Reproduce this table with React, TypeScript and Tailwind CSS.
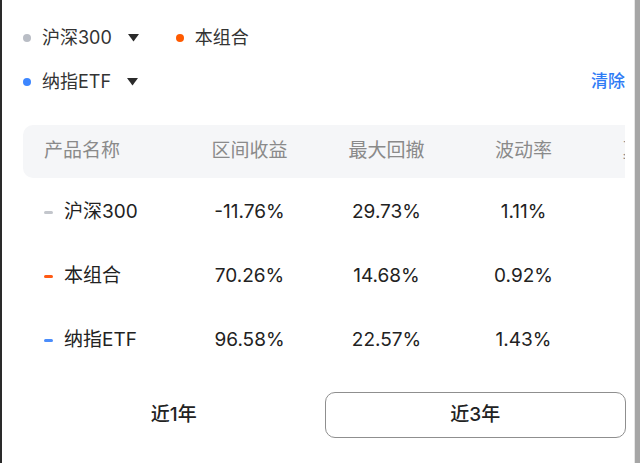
import { Fragment } from 'react'

const font = { fontFamily: 'Inter, "Noto Sans CJK SC", "Noto Sans", sans-serif' }

interface Row {
  name: string
  color: string
  ret: string
  drawdown: string
  vol: string
  extra: string
}

const rows: Row[] = [
  { name: '沪深300', color: 'bg-[#c3c6cc]', ret: '-11.76%', drawdown: '29.73%', vol: '1.11%', extra: '-3.90%' },
  { name: '本组合', color: 'bg-[#ff5a14]', ret: '70.26%', drawdown: '14.68%', vol: '0.92%', extra: '19.43%' },
  { name: '纳指ETF', color: 'bg-[#4b8dfb]', ret: '96.58%', drawdown: '22.57%', vol: '1.43%', extra: '25.35%' },
]

function Caret() {
  return (
    <svg width="11" height="8" viewBox="0 0 11 8" className="shrink-0">
      <path d="M0 0 H11 L5.5 7.5 Z" fill="#2b2b2b" />
    </svg>
  )
}

function LegendItem({ dot, label, caret }: { dot: string; label: string; caret?: boolean }) {
  return (
    <span className="flex items-center">
      <span className={`h-2 w-2 rounded-full ${dot}`} />
      <span className="ml-[11px] text-[18px] leading-none text-[#333]">{label}</span>
      {caret && <span className="ml-[16px] flex"><Caret /></span>}
    </span>
  )
}

export default function App() {
  return (
    <div className="flex h-[463px] w-[640px] bg-white" style={font}>
      <div className="w-[2px] shrink-0 bg-[#2a2a2a]" />
      <div className="flex min-w-0 flex-1 flex-col pl-[21px] pr-[9px]">
        {/* legend */}
        <div className="mt-[28px] flex h-[20px] items-center">
          <LegendItem dot="bg-[#b9bdc5]" label="沪深300" caret />
          <span className="ml-[37px]">
            <LegendItem dot="bg-[#ff5a00]" label="本组合" />
          </span>
        </div>
        <div className="mt-[24px] flex h-[20px] items-center justify-between">
          <LegendItem dot="bg-[#3d86ff]" label="纳指ETF" caret />
          <span className="text-[17px] font-medium text-[#2f7bf5]">清除</span>
        </div>

        {/* table */}
        <div className="mt-[33px] overflow-hidden">
          <div className="w-[740px]">
            <div className="grid h-[53px] grid-cols-[158px_137px_137px_137px_137px] items-center rounded-[10px] bg-[#f5f6f8] text-[19px] text-[#8a8a8a]">
              <span className="pl-[21px]">产品名称</span>
              <span className="text-center">区间收益</span>
              <span className="text-center">最大回撤</span>
              <span className="text-center">波动率</span>
              <span className="text-center">夏普比率</span>
            </div>
            <div className="mt-[2px] grid grid-cols-[158px_137px_137px_137px_137px] text-[19px] text-[#222]">
              {rows.map((r) => (
                <Fragment key={r.name}>
                  <span className="flex h-[64px] items-center pl-[21px]">
                    <span className={`h-[3px] w-[9px] rounded-full ${r.color}`} />
                    <span className="ml-[11px]">{r.name}</span>
                  </span>
                  <span className="flex h-[64px] items-center justify-center">{r.ret}</span>
                  <span className="flex h-[64px] items-center justify-center">{r.drawdown}</span>
                  <span className="flex h-[64px] items-center justify-center">{r.vol}</span>
                  <span className="flex h-[64px] items-center justify-center">{r.extra}</span>
                </Fragment>
              ))}
            </div>
          </div>
        </div>

        {/* period switch */}
        <div className="mt-[20px] grid w-[603px] grid-cols-2">
          <button className="h-[46px] text-[19px] font-medium text-[#222]">近1年</button>
          <button className="h-[46px] rounded-[10px] border-[1.5px] border-[#8f8f8f] text-[19px] font-medium text-[#222]">
            近3年
          </button>
        </div>
      </div>
      <div className="w-px shrink-0 bg-[#e6e6e6]" />
      <div className="w-[5px] shrink-0 bg-[#a6a6a6]" />
    </div>
  )
}
